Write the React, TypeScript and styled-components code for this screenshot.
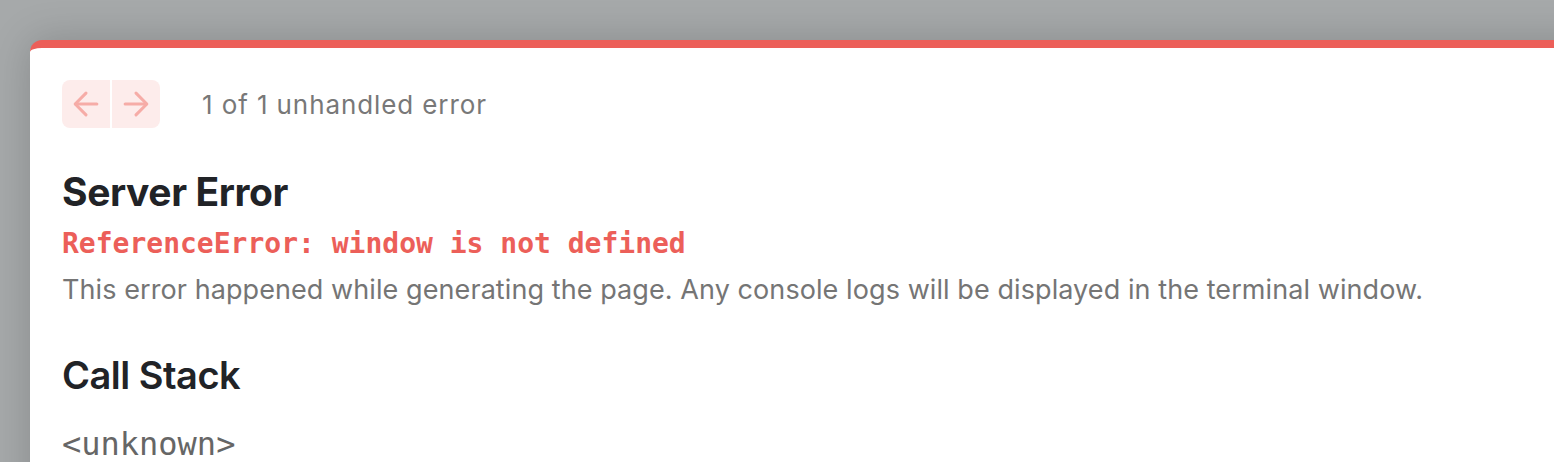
import React from "react";
import styled, { createGlobalStyle } from "styled-components";

const Global = createGlobalStyle`
  html, body { margin: 0; padding: 0; }
  body {
    background: #a6a9aa;
    overflow: hidden;
    width: 1554px;
    height: 462px;
    font-family: Inter, "Noto Sans", sans-serif;
  }
`;

const Backdrop = styled.div`
  padding: 40px 0 0 30px;
  height: 462px;
  box-sizing: border-box;
  overflow: hidden;
`;

const Dialog = styled.div`
  width: 1600px;
  height: 600px;
  background: #ffffff;
  border-top: 8px solid #ec5f59;
  border-radius: 12px 12px 0 0;
  box-shadow: 0 0 40px rgba(0, 0, 0, 0.18);
  padding: 32px;
  box-sizing: border-box;
`;

const Nav = styled.nav`
  display: flex;
  align-items: center;
  height: 48px;
`;

const NavGroup = styled.div`
  display: flex;
  gap: 2px;
  margin-right: 42px;
`;

const NavButton = styled.button<{ $side: "left" | "right" }>`
  width: 48px;
  height: 48px;
  border: none;
  padding: 0;
  background: #fdeceb;
  display: flex;
  align-items: center;
  justify-content: center;
  border-radius: ${(p) => (p.$side === "left" ? "8px 0 0 8px" : "0 8px 8px 0")};
  color: #f6aca7;
`;

const NavText = styled.span`
  font-size: 26px;
  color: #787878;
  letter-spacing: 0.9px;
`;

const Title = styled.h1`
  margin: 41px 0 0;
  font-size: 39px;
  line-height: 46px;
  font-weight: 700;
  color: #212327;
  letter-spacing: -0.4px;
`;

const ErrorMessage = styled.p`
  margin: 9px 0 0;
  font-family: "DejaVu Sans Mono", monospace;
  font-size: 28px;
  line-height: 40px;
  font-weight: 700;
  color: #ec5f59;
`;

const Description = styled.p`
  margin: 6px 0 0;
  font-size: 27px;
  line-height: 40px;
  color: #757575;
  letter-spacing: 0.08px;
`;

const SectionTitle = styled.h2`
  margin: 42px 0 0;
  font-size: 38px;
  line-height: 46px;
  font-weight: 600;
  color: #212327;
  letter-spacing: -0.5px;
`;

const Frame = styled.div`
  margin-top: 26px;
  font-family: "DejaVu Sans Mono", monospace;
  font-size: 32px;
  line-height: 40px;
  color: #666666;
`;

const Arrow = ({ dir }: { dir: "left" | "right" }) => (
  <svg width="26" height="26" viewBox="0 0 24 24" fill="none" stroke="currentColor" strokeWidth="2.8" strokeLinecap="round" strokeLinejoin="round"
    style={{ transform: dir === "right" ? "scaleX(-1)" : undefined }}>
    <path d="M12 2 2 12l10 10" />
    <path d="M2.5 12H22" />
  </svg>
);

export default function App() {
  return (
    <>
      <Global />
      <Backdrop>
        <Dialog>
          <Nav>
            <NavGroup>
              <NavButton $side="left" aria-label="previous"><Arrow dir="left" /></NavButton>
              <NavButton $side="right" aria-label="next"><Arrow dir="right" /></NavButton>
            </NavGroup>
            <NavText>1 of 1 unhandled error</NavText>
          </Nav>
          <Title>Server Error</Title>
          <ErrorMessage>ReferenceError: window is not defined</ErrorMessage>
          <Description>This error happened while generating the page. Any console logs will be displayed in the terminal window.</Description>
          <SectionTitle>Call Stack</SectionTitle>
          <Frame>&lt;unknown&gt;</Frame>
        </Dialog>
      </Backdrop>
    </>
  );
}
